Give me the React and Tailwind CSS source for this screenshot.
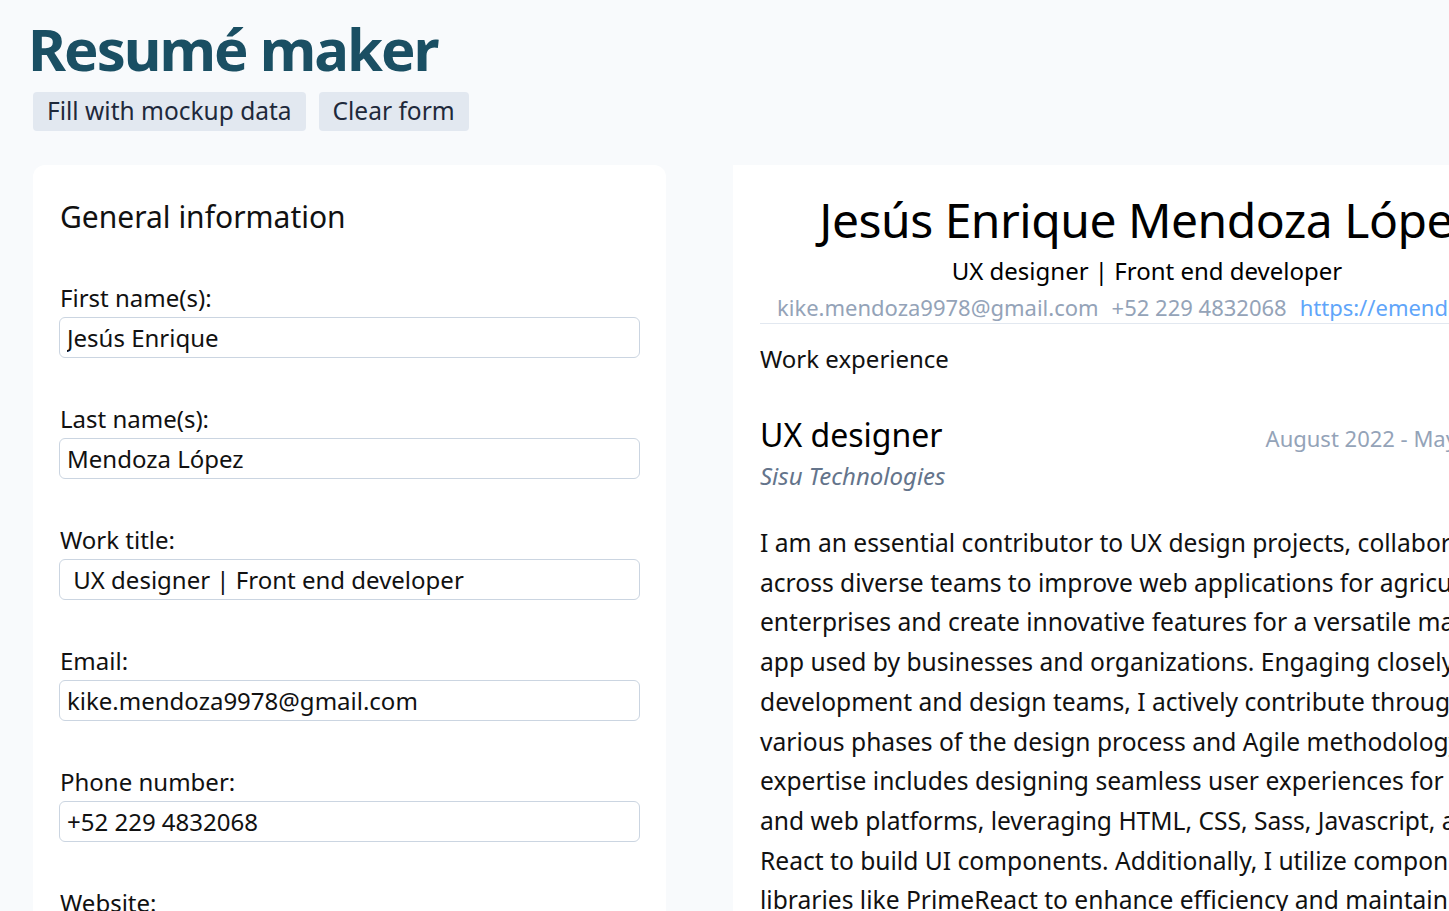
import React, { useState } from 'react';

const mockup = {
  firstName: 'Jesús Enrique',
  lastName: 'Mendoza López',
  title: ' UX designer | Front end developer',
  email: 'kike.mendoza9978@gmail.com',
  phone: '+52 229 4832068',
  website: 'https://emendoza.dev',
};

const empty = { firstName: '', lastName: '', title: '', email: '', phone: '', website: '' };

const fields = [
  { key: 'firstName', label: 'First name(s):' },
  { key: 'lastName', label: 'Last name(s):' },
  { key: 'title', label: 'Work title:' },
  { key: 'email', label: 'Email:' },
  { key: 'phone', label: 'Phone number:' },
  { key: 'website', label: 'Website:' },
];

const summary = [
  'I am an essential contributor to UX design projects, collaborating',
  'across diverse teams to improve web applications for agricultural',
  'enterprises and create innovative features for a versatile management',
  'app used by businesses and organizations. Engaging closely with',
  'development and design teams, I actively contribute throughout',
  'various phases of the design process and Agile methodology. My',
  'expertise includes designing seamless user experiences for mobile',
  'and web platforms, leveraging HTML, CSS, Sass, Javascript, and',
  'React to build UI components. Additionally, I utilize component',
  'libraries like PrimeReact to enhance efficiency and maintain',
];

const App = () => {
  const [form, setForm] = useState(mockup);

  return (
    <div className="h-screen overflow-hidden bg-[#f8fafc] font-['Noto_Sans',sans-serif]">
      <div className="w-[1600px]">
        <h1 className="pl-[28px] pt-[13px] text-[58px] font-bold leading-[72px] text-[#1a4f63] tracking-[-2px]">Resumé maker</h1>
        <div className="flex gap-[13px] pl-[33px] mt-[7px]">
          <button onClick={() => setForm(mockup)} className="h-[39px] px-[14px] rounded bg-[#e2e8f0] text-[24.5px] text-[#1e293b] leading-none">Fill with mockup data</button>
          <button onClick={() => setForm(empty)} className="h-[39px] px-[14px] rounded bg-[#e2e8f0] text-[24.5px] text-[#1e293b] leading-none">Clear form</button>
        </div>

        <div className="flex gap-[67px] pl-[33px] mt-[34px] items-start">
          {/* form */}
          <div className="w-[633px] bg-white rounded-xl px-[26px] pt-[30px] pb-8">
            <h2 className="text-[30px] leading-[44px] text-[#111] pl-[1px]">General information</h2>
            <div className="mt-[40px] flex flex-col gap-[42px]">
              {fields.map((f) => (
                <label key={f.key} className="flex flex-col">
                  <span className="text-[24px] leading-[38px] text-[#111] pl-[1px]">{f.label}</span>
                  <input
                    value={form[f.key]}
                    onChange={(e) => setForm({ ...form, [f.key]: e.target.value })}
                    className="h-[41px] w-[581px] border border-[#cbd5e1] rounded-md px-[7px] text-[24px] text-[#111] outline-none"
                  />
                </label>
              ))}
            </div>
          </div>

          {/* preview */}
          <div className="w-[828px] bg-white px-[27px] pt-[23px] pb-8">
            <div className="text-center text-[48px] leading-[64px] tracking-[-0.5px] text-black">
              {form.firstName} {form.lastName}
            </div>
            <div className="text-center text-[24px] leading-[30px] text-black mt-[4px]">{form.title.trim()}</div>
            <div className="flex gap-[13px] pl-[17px] text-[22px] leading-[32px] border-b border-[#e2e8f0] mt-[5px]">
              <span className="text-[#94a3b8]">{form.email}</span>
              <span className="text-[#94a3b8]">{form.phone}</span>
              <a className="text-[#60a5fa]">{form.website}</a>
            </div>

            <div className="text-[24px] leading-[34px] text-[#111] mt-[18px]">Work experience</div>

            <div className="flex justify-between items-baseline mt-[39px]">
              <span className="text-[32px] leading-[40px] text-black">UX designer</span>
              <span className="text-[22px] text-[#94a3b8] mr-[21px]">August 2022 - May 2023</span>
            </div>
            <div className="italic text-[24px] leading-[36px] text-[#64748b] mt-[3px]">Sisu Technologies</div>

            <div className="mt-[29px] text-[24.6px] leading-[39.7px] text-[#111]">
              {summary.map((l) => (
                <div key={l} className="whitespace-nowrap">{l}</div>
              ))}
            </div>
          </div>
        </div>
      </div>
    </div>
  );
};

export default App;
